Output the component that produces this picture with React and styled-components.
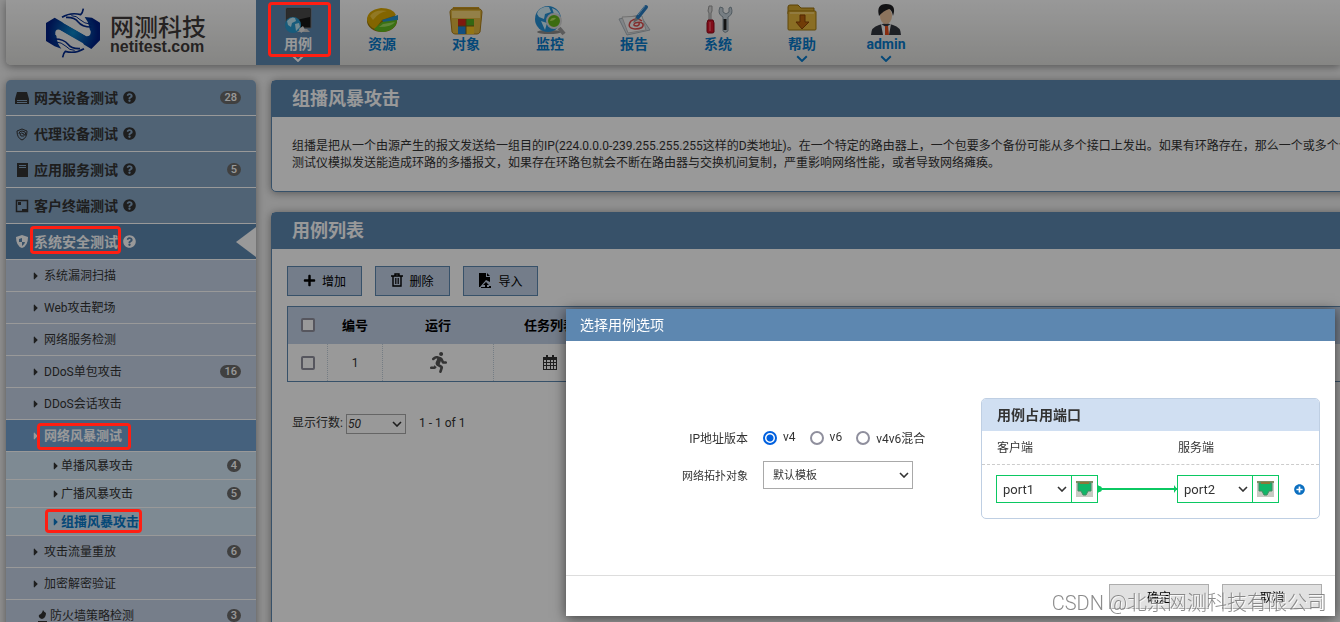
import React, { useState } from 'react';
import styled, { createGlobalStyle, css } from 'styled-components';
import { FaQuestionCircle, FaCaretRight, FaPlus, FaPlusCircle, FaRunning } from 'react-icons/fa';

const GlobalStyle = createGlobalStyle`
  * {
    box-sizing: border-box;
  }

  body {
    margin: 0;
    background: #f0f0f0;
    color: #333;
    font-family: Roboto, "Noto Sans CJK SC", sans-serif;
    font-size: 12px;
  }

  button, input, select {
    font-family: inherit;
    margin: 0;
  }

  a {
    color: inherit;
    text-decoration: none;
  }

  h1, h2, p {
    margin: 0;
  }

  svg {
    display: block;
    flex: none;
  }
`;

const Page = styled.div`
  height: 100vh;
  overflow: hidden;
`;

const Backdrop = styled.div`
  position: fixed;
  inset: 0;
  z-index: 10;
  background: rgba(0, 0, 0, 0.4);
`;

/* red frame that stays bright above the backdrop */
const marked = css`
  position: relative;

  &::after {
    content: "";
    position: absolute;
    inset: ${props => props.$inset || '0'};
    z-index: 15;
    border: 3px solid #ff1e12;
    border-radius: 4px;
    pointer-events: none;
  }
`;

/* ---------- top bar ---------- */

const Header = styled.header`
  display: flex;
  height: 65px;
  margin-left: 6px;
  background: linear-gradient(#fefefe, #dfdfdc);
  border-bottom-left-radius: 5px;
  box-shadow: 0 2px 8px rgba(0, 0, 0, 0.4);
`;

const Brand = styled.a`
  display: flex;
  align-items: center;
  width: 250px;
  padding-left: 40px;
  gap: 9px;
`;

const BrandText = styled.span`
  display: flex;
  flex-direction: column;
  padding-top: 4px;
  color: #3f3a39;
`;

const BrandName = styled.span`
  font-size: 24px;
  line-height: 24px;
  font-weight: 500;
`;

const BrandSite = styled.span`
  font-family: "Liberation Sans", sans-serif;
  font-size: 16px;
  line-height: 14px;
  font-weight: bold;
`;

const Nav = styled.nav`
  display: flex;
`;

const NavItem = styled.a`
  display: flex;
  flex-direction: column;
  align-items: center;
  width: 84px;
  height: 65px;
  padding-top: 4px;
  color: ${props => (props.$active ? '#fff' : '#0878c8')};
  background: ${props => (props.$active ? '#5d87b0' : 'transparent')};
  ${props => props.$active && marked}
`;

const NavLabel = styled.span`
  font-size: 14px;
  line-height: 16px;
  font-weight: bold;
  margin-bottom: 3px;
`;

/* ---------- side menu ---------- */

const Columns = styled.div`
  display: flex;
  align-items: flex-start;
  gap: 15px;
  padding: 15px 0 0 6px;
`;

const Side = styled.ul`
  flex: none;
  width: 250px;
  margin: 0;
  padding: 0;
  list-style: none;
  background: #c5d3e7;
  border-radius: 5px;
  box-shadow: 0 1px 8px rgba(0, 0, 0, 0.4);
`;

const SideRow = styled.li`
  display: flex;
  align-items: center;
  position: relative;
  padding-right: 15px;
  border-bottom: 1px solid #fff;

  ${props => props.$level === 1 && css`
    height: 36px;
    padding-left: 8px;
    background: ${props.$active ? '#5d87b0' : '#86a5c3'};
    color: ${props.$active ? '#fff' : '#333'};
    font-size: 14px;
    font-weight: bold;
  `}

  ${props => props.$level === 2 && css`
    height: 32px;
    padding-left: 28px;
    background: ${props.$active ? '#73a2d0' : '#c5d3e7'};
    color: ${props.$active ? '#fff' : '#333'};
    font-size: ${props.$active ? '13px' : '12px'};
    font-weight: ${props.$active ? 'bold' : 'normal'};
  `}

  ${props => props.$level === 3 && css`
    height: 28px;
    padding-left: 48px;
    background: #d3e6f5;
    color: ${props.$active ? '#0878c8' : '#333'};
    font-size: ${props.$active ? '13px' : '12px'};
    font-weight: ${props.$active ? 'bold' : 'normal'};
  `}

  &:first-child {
    border-top-left-radius: 5px;
    border-top-right-radius: 5px;
  }
`;

const RowIcon = styled.span`
  display: flex;
  justify-content: center;
  width: ${props => (props.$wide ? '16px' : '4px')};
  margin-right: ${props => props.$gap || '6px'};
`;

const RowLink = styled.a`
  line-height: 20px;
  white-space: nowrap;
  ${props => props.$marked && marked}
`;

const Help = styled.span`
  margin-left: 5px;
`;

const Badge = styled.span`
  margin-left: auto;
  min-width: 14px;
  height: 13px;
  padding: 0 4px;
  border-radius: 7px;
  background: #6b6b6b;
  color: #fff;
  font-size: 11px;
  line-height: 13px;
  font-weight: 500;
  text-align: center;
`;

const Notch = styled.span`
  position: absolute;
  right: 0;
  top: 3px;
  border: solid transparent;
  border-width: 15px 20px 15px 0;
  border-right-color: #fff;
`;

/* ---------- content ---------- */

const Main = styled.main`
  flex: 1;
  min-width: 0;
  display: flex;
  flex-direction: column;
  gap: 20px;
`;

const Panel = styled.section`
  margin-right: -12px;
  border: 1px solid #5d87b0;
  border-radius: 5px;
  background: #fff;
  box-shadow: 0 1px 8px rgba(0, 0, 0, 0.4);
`;

const PanelTitle = styled.h1`
  height: 36px;
  padding-left: 20px;
  background: #5d87b0;
  color: #fff;
  font-size: 18px;
  line-height: 36px;
  font-weight: bold;
`;

const Intro = styled.div`
  padding: 21px 0 19px 20px;
  line-height: 17px;
  overflow: hidden;
  white-space: nowrap;
`;

const ListBody = styled.div`
  min-height: 400px;
  padding: 17px 0 0 15px;
`;

const Tools = styled.div`
  display: flex;
  gap: 13px;
  margin-bottom: 10px;
`;

const ToolButton = styled.button`
  display: flex;
  align-items: center;
  justify-content: center;
  gap: 6px;
  width: 75px;
  height: 30px;
  padding: 0 0 2px;
  border: 1px solid #5d87b0;
  background: #c2d0e6;
  color: #000;
  font-size: 12px;
`;

const Table = styled.table`
  width: 100%;
  table-layout: fixed;
  border: 1px solid #5d87b0;
  border-spacing: 0;

  th {
    height: 37px;
    padding: 0 0 2px 1px;
    background: #c2d0e6;
    color: #000;
    font-size: 13px;
  }

  td {
    height: 37px;
    padding: 0;
    text-align: center;
  }

  td + td {
    border-left: 1px dotted #c3d0dc;
  }

  td > svg, th > input, td > input {
    margin: 0 auto;
  }
`;

const Check = styled.input.attrs({ type: 'checkbox' })`
  appearance: none;
  display: block;
  width: 14px;
  height: 14px;
  border: 2px solid #8f8f9d;
  border-radius: 2px;
  background: #fff;
`;

const Pager = styled.div`
  display: flex;
  align-items: center;
  gap: 3px;
  height: 20px;
  margin: 32px 0 0 5px;
  line-height: 16px;

  label, label ~ span:last-child {
    padding-bottom: 2px;
  }
`;

const SelectWrap = styled.span`
  display: inline-flex;
  position: relative;
  width: ${props => props.$width};
  height: ${props => props.$height || '28px'};

  svg {
    position: absolute;
    right: 4px;
    top: 50%;
    margin-top: -3px;
    pointer-events: none;
  }
`;

const Select = styled.select`
  appearance: none;
  width: 100%;
  height: 100%;
  padding: 0 0 0 ${props => props.$pad || '5px'};
  border: 1px solid ${props => props.$line || '#a9a9a9'};
  border-radius: 0;
  background: #fff;
  color: #333;
  font-size: ${props => props.$size || '12px'};
  font-style: ${props => (props.$italic ? 'italic' : 'normal')};
`;

const Total = styled.span`
  margin-left: 10px;
`;

/* ---------- dialog ---------- */

const Dialog = styled.div`
  position: fixed;
  right: 5px;
  bottom: 6px;
  z-index: 20;
  display: flex;
  flex-direction: column;
  width: 769px;
  max-width: 100%;
  background: #fff;
  box-shadow: 0 2px 12px rgba(0, 0, 0, 0.6);
`;

const DialogTitle = styled.h2`
  height: 32px;
  padding-left: 14px;
  background: #5d87b0;
  color: #fff;
  font-size: 14px;
  line-height: 32px;
  font-weight: normal;
`;

const DialogBody = styled.div`
  display: flex;
  justify-content: space-between;
  align-items: flex-start;
  padding: 57px 15px 56px 112px;
`;

const Form = styled.form`
  display: flex;
  flex-direction: column;
  gap: 10px;
  padding-top: 25px;
`;

const Field = styled.div`
  display: flex;
  align-items: center;
  height: 28px;
`;

const FieldLabel = styled.label`
  width: 70px;
  margin-right: 15px;
  text-align: right;
  font-size: ${props => props.$size || '12px'};
  white-space: nowrap;
`;

const RadioLabel = styled.label`
  display: flex;
  align-items: center;
  gap: 6px;
  margin-right: 14px;
`;

const Radio = styled.input.attrs({ type: 'radio' })`
  appearance: none;
  width: 14px;
  height: 14px;
  margin-top: 1px;
  border: 2px solid #8f8f9d;
  border-radius: 50%;
  background: #fff;

  &:checked {
    border-color: #0060df;
    background: radial-gradient(circle, #0060df 3px, #fff 4px);
  }
`;

const PortBox = styled.section`
  width: 339px;
  border: 1px solid #bfcfe3;
  border-radius: 5px;
  overflow: hidden;
`;

const PortTitle = styled.h2`
  height: 32px;
  padding-left: 15px;
  background: #d0dff2;
  font-size: 14px;
  line-height: 32px;
`;

const PortHead = styled.div`
  display: grid;
  grid-template-columns: 181px 1fr;
  height: 34px;
  padding-left: 15px;
  line-height: 34px;
  border-bottom: 1px dashed #ccc;
`;

const PortRow = styled.div`
  display: flex;
  align-items: center;
  padding: 10px 0 15px 14px;
`;

const Port = styled.span`
  display: flex;
  width: 102px;
  height: 28px;
  border: 1px solid #0bc862;
`;

const PortJack = styled.span`
  display: flex;
  align-items: center;
  justify-content: center;
  width: 26px;
  border-left: 1px solid #0bc862;
`;

const AddPort = styled.button`
  margin-left: 15px;
  padding: 0;
  border: 0;
  background: none;
  color: #0b6fc0;
`;

const DialogFoot = styled.div`
  display: flex;
  justify-content: flex-end;
  gap: 13px;
  padding: 8px 13px 7px;
  border-top: 1px solid #ddd;
`;

const FootButton = styled.button`
  width: 100px;
  height: 25px;
  padding: 0;
  border: 1px solid #adadad;
  background: #e1e1e1;
  color: #000;
  font-size: 12px;
`;

const Watermark = styled.div`
  position: fixed;
  right: 13px;
  bottom: 5px;
  z-index: 30;
  color: rgba(120, 120, 120, 0.85);
  font-size: 20px;
  line-height: 28px;
  font-weight: 300;
  text-shadow: 1px 1px 0 rgba(255, 255, 255, 0.8);
  white-space: nowrap;
  pointer-events: none;
`;

/* ---------- drawings ---------- */

const Chevron = ({ size = 10 }) => (
  <svg width={size} height={size * 0.6} viewBox="0 0 10 6" fill="none" stroke="currentColor" strokeWidth="1.6">
    <path d="M1 1l4 4 4-4" />
  </svg>
);

const LogoArcs = () => (
  <g>
    <path d="M78 51Q104 35 134 43Q140 38 142 25" strokeWidth="5" />
    <path d="M90 51Q116 50 126 64Q138 80 166 80" strokeWidth="5" />
    <path d="M106 46Q122 46 132 58Q144 70 166 72" strokeWidth="3" />
  </g>
);

const Logo = () => (
  <svg width="55" height="50" viewBox="30 23 165 150">
    <defs>
      <radialGradient id="logoFill" gradientUnits="userSpaceOnUse" cx="111" cy="97" r="75">
        <stop offset="0" stopColor="#0a88c8" />
        <stop offset="1" stopColor="#001f82" />
      </radialGradient>
    </defs>
    <path
      d="M30 68L56 52L152 108Q164 96 160 80Q158 66 146 50L168 52L192 67V120L166 146L70 88Q58 96 62 112Q64 130 76 145L56 138L30 122Z"
      fill="url(#logoFill)"
    />
    <path d="M82 56Q98 48 116 52Q150 70 164 92Q166 108 152 108L82 68Q76 62 82 56Z" fill="#f0f0ef" />
    <path d="M140 138Q124 146 106 142Q72 124 58 102Q56 86 70 88L140 128Q146 132 140 138Z" fill="#f0f0ef" />
    <g fill="none" stroke="#00288a">
      <LogoArcs />
      <g transform="rotate(180 111 98)">
        <LogoArcs />
      </g>
    </g>
  </svg>
);

const Picture = ({ children }) => (
  <svg width="34" height="32" viewBox="0 0 34 32">{children}</svg>
);

const CasePicture = () => (
  <Picture>
    <path d="M5 4h25v20H5z" fill="#151515" stroke="#777" />
    <path d="M6 5h23v8L6 18z" fill="#4a4a4a" />
    <path d="M17 25h9l3 3H15z" fill="#ccc" />
    <circle cx="12" cy="21" r="8" fill="#2799cf" />
    <path d="M6 17q4-5 8-3l1 3-4 2-1 4-3-2zM14 20l4-1 1 4-4 4z" fill="#bfe8f5" />
    <path d="M18 25l4-3 2 4-4 3z" fill="#e6e6e6" />
  </Picture>
);

const ResourcePicture = () => (
  <Picture>
    <ellipse cx="17" cy="17" rx="15" ry="11" fill="#9b7400" />
    <path d="M17 16L31 11Q28 4 16 4Q2 6 2 16Q4 23 10 25Z" fill="#dba800" />
    <path d="M5 12Q10 5 22 7Q14 8 8 16Z" fill="#f2c93c" />
    <path d="M17 16l16-5v5l-14 3z" fill="#2493ce" />
    <path d="M17 18l15-2Q31 26 18 28Q12 28 9 25Z" fill="#62bd20" />
    <path d="M18 20l12-2q-3 5-16 5z" fill="#9ee061" />
  </Picture>
);

const ObjectPicture = () => (
  <Picture>
    <path d="M4 3h26l1 4H3z" fill="#c99720" />
    <path d="M3 5h28q2 1 2 3l-2 20q-1 2-3 2H6q-2 0-3-2L1 8q0-2 2-3z" fill="#e0b63e" stroke="#ab7c14" />
    <path d="M3 7h28v7H3z" fill="#f5d679" />
    <path d="M9 15h8v7H9z" fill="#d42a18" />
    <path d="M17 15h8v7h-8z" fill="#56aa1e" />
    <path d="M9 22h8v8H9z" fill="#2184d4" />
    <path d="M17 22h8v8h-8z" fill="#f5c421" />
    <path d="M9 22h16M17 15v15" stroke="#7b5a14" />
  </Picture>
);

const MonitorPicture = () => (
  <Picture>
    <ellipse cx="16" cy="28" rx="12" ry="2" fill="#8b8b8b" />
    <circle cx="15" cy="15" r="13" fill="#2690d4" />
    <path d="M5 7Q10 2 16 3l2 5-6 2-1 5-5-2-2-3zM19 4q6 2 8 7l-6-1zM8 17l6 2-2 7z" fill="#d3effa" />
    <path d="M26 24l5 6" stroke="#999" strokeWidth="4" />
    <circle cx="21" cy="17" r="7" fill="#65b51b" stroke="#d5d5d5" strokeWidth="2" />
    <path d="M17 17q1-4 6-3q-2 3-6 3z" fill="#b8e45f" />
  </Picture>
);

const ReportPicture = () => (
  <Picture>
    <path d="M2 15l21-4 10 15-23 5z" fill="#d6dde2" stroke="#a7b1b8" />
    <path d="M5 13l20-1 4 14-18 3z" fill="#f5f5f5" stroke="#bbb" />
    <path d="M25 17q-5-4-11 0q-5 7 4 8q9 0 8-5q-2-3-8-1q-3 3 2 3q3-1 2-3" fill="none" stroke="#db4c4c" strokeWidth="1.5" />
    <path d="M16 19l3-7 4 3z" fill="#999" />
    <path d="M21 13L29 3" stroke="#287cc2" strokeWidth="4" strokeLinecap="round" />
    <path d="M21 11L28 2" stroke="#8bc2ea" strokeWidth="1" />
  </Picture>
);

const SystemPicture = () => (
  <Picture>
    <path d="M8 2h3v5l-1 2v9H8V9L7 7z" fill="#ddd" stroke="#999" strokeWidth="1" />
    <path d="M7 16h5l1 3v9q0 1-2 1H7q-1 0-1-2v-8z" fill="#d8152a" stroke="#8e0916" />
    <path d="M9 18v9" stroke="#ff7f84" />
    <path d="M19 3q-3 7 3 10v14q2 3 5 0V13q6-3 3-10l-2 1v4l-3 2-3-2V4z" fill="#c7d3da" stroke="#8797a1" />
    <path d="M24 15v11" stroke="#222" strokeWidth="3" />
  </Picture>
);

const HelpPicture = () => (
  <Picture>
    <path d="M3 3q0-2 2-2h8l3 3h13v6H3z" fill="#d4a72d" stroke="#99700d" />
    <rect x="3" y="7" width="28" height="19" rx="1" fill="#e6b73d" stroke="#a1780e" />
    <path d="M5 9h24" stroke="#ffe69a" />
    <path d="M15 11h5v7h4l-7 7-6-7h4z" fill="#bd650d" stroke="#894507" />
  </Picture>
);

const AdminPicture = () => (
  <Picture>
    <path d="M2 31q0-8 8-10l7-2 7 2q8 2 8 10z" fill="#33363e" />
    <path d="M12 20l5 3 5-3-2 11h-6z" fill="#f4f4f4" />
    <path d="M16 22h3l1 9h-4z" fill="#e34b1b" />
    <ellipse cx="17" cy="12" rx="6" ry="8" fill="#eac19c" />
    <path d="M10 12Q7 0 17 0q11 0 7 12q-1-6-4-7q-6 2-10 7z" fill="#202124" />
  </Picture>
);

const MenuIcon = ({ kind }) => (
  <svg width="14" height="14" viewBox="0 0 14 14" fill="currentColor">
    {kind === 'gateway' && (
      <path d="M2 1h10l2 7v5H0V8zM2 9v1h10V9zM2 11v1h10v-1z" fillRule="evenodd" />
    )}
    {kind === 'proxy' && (
      <g fill="none" stroke="currentColor">
        <path d="M7 2l5 2q0 7-5 9q-5-2-5-9z" />
        <path d="M9 9q-4 1-4-2q1-2 4 0v1h2q0-4-4-4q-3 0-3 3" />
      </g>
    )}
    {kind === 'server' && <path d="M2 0h11v14H2zM4 3h7V2H4zm0 2h7V4H4z" fillRule="evenodd" />}
    {kind === 'client' && (
      <g>
        <path d="M1.500 1.500h11v11h-11z" fill="none" stroke="currentColor" strokeWidth="1.500" />
        <path d="M3 3h3v3H3zM7 10h5v2H7z" />
      </g>
    )}
    {kind === 'shield' && (
      <path d="M7 0l6 2q0 9-6 11Q1 11 1 2zM7 3L4 4v3h3zM7 7v4q3-2 3-4z" fillRule="evenodd" />
    )}
    {kind === 'flame' && <path d="M8 1q1 2 3 3q0 5-4 6q-4-1-3-4q3-1 4-5zM3 12h9v2H3z" />}
  </svg>
);

const TrashIcon = () => (
  <svg width="12" height="14" viewBox="0 0 12 14" fill="none" stroke="currentColor" strokeWidth="1.4">
    <path d="M0 3h12M4 3V1h4v2M2 3v10h8V3" />
    <path d="M4.500 5v6M6 5v6M7.500 5v6" strokeWidth="0.8" />
  </svg>
);

const ImportIcon = () => (
  <svg width="14" height="15" viewBox="0 0 14 15" fill="currentColor">
    <path d="M1 0h7v4h4v5L8 7l-6 7H1z" />
    <path d="M9 0l3 3H9zM8 9l3 3H9v2H7v-2H5zM11 13h2v2H3v-1h8z" />
  </svg>
);

const CalendarIcon = () => (
  <svg width="14" height="15" viewBox="0 0 14 15" fill="currentColor">
    <path
      d="M3 0h2v2h4V0h2v2h3v13H0V2h3zM1 5v2h2V5zm3 0v2h3V5zm4 0v2h2V5zm3 0v2h2V5zM1 8v2h2V8zm3 0v2h3V8zm4 0v2h2V8zm3 0v2h2V8zM1 11v3h2v-3zm3 0v3h3v-3zm4 0v3h2v-3zm3 0v3h2v-3z"
      fillRule="evenodd"
    />
  </svg>
);

const JackIcon = () => (
  <svg width="17" height="16" viewBox="0 0 17 16">
    <path d="M0 0h17v16H0z" fill="#c6cac3" />
    <path d="M0 0h17v2H0z" fill="#7f8c64" />
    <path d="M2 2h13v8h-3l-2 4H7l-2-4H2z" fill="#10b668" stroke="#418c62" />
    <path d="M4 2h9" stroke="#8a7739" strokeWidth="2" />
  </svg>
);

const Cable = () => (
  <svg width="79" height="8" viewBox="0 0 79 8" fill="#0bc862">
    <path d="M0 0l4 4-4 4zM76 0l3 4-3 4z" />
    <circle cx="1" cy="4" r="3" />
    <path d="M0 3h79v2H0z" />
  </svg>
);

/* ---------- data ---------- */

const navItems = [
  { label: '用例', picture: CasePicture, active: true, more: true },
  { label: '资源', picture: ResourcePicture },
  { label: '对象', picture: ObjectPicture },
  { label: '监控', picture: MonitorPicture },
  { label: '报告', picture: ReportPicture },
  { label: '系统', picture: SystemPicture },
  { label: '帮助', picture: HelpPicture, more: true },
  { label: 'admin', picture: AdminPicture, more: true },
];

const menu = [
  { level: 1, label: '网关设备测试', icon: 'gateway', count: 28 },
  { level: 1, label: '代理设备测试', icon: 'proxy' },
  { level: 1, label: '应用服务测试', icon: 'server', count: 5 },
  { level: 1, label: '客户终端测试', icon: 'client' },
  { level: 1, label: '系统安全测试', icon: 'shield', active: true, inset: '-6px -3px -2px -4px' },
  { level: 2, label: '系统漏洞扫描' },
  { level: 2, label: 'Web攻击靶场' },
  { level: 2, label: '网络服务检测' },
  { level: 2, label: 'DDoS单包攻击', count: 16 },
  { level: 2, label: 'DDoS会话攻击' },
  { level: 2, label: '网络风暴测试', active: true, inset: '-3px -9px -4px -7px' },
  { level: 3, label: '单播风暴攻击', count: 4 },
  { level: 3, label: '广播风暴攻击', count: 5 },
  { level: 3, label: '组播风暴攻击', active: true, inset: '-3px -3px -1px -16px' },
  { level: 2, label: '攻击流量重放', count: 6 },
  { level: 2, label: '加密解密验证' },
  { level: 2, label: '防火墙策略检测', icon: 'flame', count: 3 },
];

const versions = ['v4', 'v6', 'v4v6混合'];

function MenuRow({ item }) {
  const { level, label, icon, count, active, inset } = item;
  return (
    <SideRow $level={level} $active={active}>
      <RowIcon $wide={!!icon} $gap={icon ? (level === 1 ? '4px' : '0') : level === 3 ? '3px' : '6px'}>
        {icon ? <MenuIcon kind={icon} /> : <FaCaretRight size={12} />}
      </RowIcon>
      <RowLink href="#" $marked={!!inset} $inset={inset}>{label}</RowLink>
      {level === 1 && <Help><FaQuestionCircle size={13} /></Help>}
      {count && <Badge>{count}</Badge>}
      {level === 1 && active && <Notch />}
    </SideRow>
  );
}

function PortSelect({ name }) {
  return (
    <Port>
      <SelectWrap $width="74px" $height="26px">
        <Select aria-label={name} $line="transparent" $size="13px">
          <option>{name}</option>
        </Select>
        <Chevron />
      </SelectWrap>
      <PortJack><JackIcon /></PortJack>
    </Port>
  );
}

export default function App() {
  const [version, setVersion] = useState('v4');

  return (
    <Page>
      <GlobalStyle />

      <Header>
        <Brand href="#">
          <Logo />
          <BrandText>
            <BrandName>网测科技</BrandName>
            <BrandSite>netitest.com</BrandSite>
          </BrandText>
        </Brand>
        <Nav>
          {navItems.map(({ label, picture: Art, active, more }) => (
            <NavItem key={label} href="#" $active={active} $inset="2px 9px 8px 12px">
              <Art />
              <NavLabel>{label}</NavLabel>
              {more && <Chevron size={12} />}
            </NavItem>
          ))}
        </Nav>
      </Header>

      <Columns>
        <Side>
          {menu.map(item => <MenuRow key={item.label} item={item} />)}
        </Side>

        <Main>
          <Panel>
            <PanelTitle>组播风暴攻击</PanelTitle>
            <Intro>
              <p>组播是把从一个由源产生的报文发送给一组目的IP(224.0.0.0-239.255.255.255这样的D类地址)。在一个特定的路由器上，一个包要多个备份可能从多个接口上发出。如果有环路存在，那么一个或多个个</p>
              <p>测试仪模拟发送能造成环路的多播报文，如果存在环路包就会不断在路由器与交换机间复制，严重影响网络性能，或者导致网络瘫痪。</p>
            </Intro>
          </Panel>

          <Panel>
            <PanelTitle as="h2">用例列表</PanelTitle>
            <ListBody>
              <Tools>
                <ToolButton type="button"><FaPlus size={13} />增加</ToolButton>
                <ToolButton type="button"><TrashIcon />删除</ToolButton>
                <ToolButton type="button"><ImportIcon />导入</ToolButton>
              </Tools>
              <Table>
                <colgroup>
                  <col width="39" />
                  <col width="55" />
                  <col width="111" />
                  <col width="113" />
                  <col />
                </colgroup>
                <thead>
                  <tr>
                    <th><Check aria-label="全选" /></th>
                    <th>编号</th>
                    <th>运行</th>
                    <th>任务列表</th>
                    <th />
                  </tr>
                </thead>
                <tbody>
                  <tr>
                    <td><Check aria-label="1" /></td>
                    <td>1</td>
                    <td><FaRunning size={21} color="#555" /></td>
                    <td><CalendarIcon /></td>
                    <td />
                  </tr>
                </tbody>
              </Table>
              <Pager>
                <label htmlFor="rows">显示行数:</label>
                <SelectWrap $width="60px" $height="20px">
                  <Select id="rows" $pad="1px" $italic>
                    <option>50</option>
                  </Select>
                  <Chevron />
                </SelectWrap>
                <Total>1 - 1 of 1</Total>
              </Pager>
            </ListBody>
          </Panel>
        </Main>
      </Columns>

      <Backdrop />

      <Dialog role="dialog" aria-labelledby="dialogTitle">
        <DialogTitle id="dialogTitle">选择用例选项</DialogTitle>
        <DialogBody>
          <Form>
            <Field role="radiogroup" aria-labelledby="versionLabel">
              <FieldLabel as="span" id="versionLabel">IP地址版本</FieldLabel>
              {versions.map(v => (
                <RadioLabel key={v}>
                  <Radio name="version" value={v} checked={version === v} onChange={() => setVersion(v)} />
                  {v}
                </RadioLabel>
              ))}
            </Field>
            <Field>
              <FieldLabel htmlFor="topology" $size="11px">网络拓扑对象</FieldLabel>
              <SelectWrap $width="150px">
                <Select id="topology" $pad="9px" $size="11px">
                  <option>默认模板</option>
                </Select>
                <Chevron />
              </SelectWrap>
            </Field>
          </Form>
          <PortBox>
            <PortTitle>用例占用端口</PortTitle>
            <PortHead>
              <span>客户端</span>
              <span>服务端</span>
            </PortHead>
            <PortRow>
              <PortSelect name="port1" />
              <Cable />
              <PortSelect name="port2" />
              <AddPort type="button" aria-label="添加"><FaPlusCircle size={11} /></AddPort>
            </PortRow>
          </PortBox>
        </DialogBody>
        <DialogFoot>
          <FootButton type="button">确定</FootButton>
          <FootButton type="button">取消</FootButton>
        </DialogFoot>
      </Dialog>

      <Watermark>CSDN @北京网测科技有限公司</Watermark>
    </Page>
  );
}
